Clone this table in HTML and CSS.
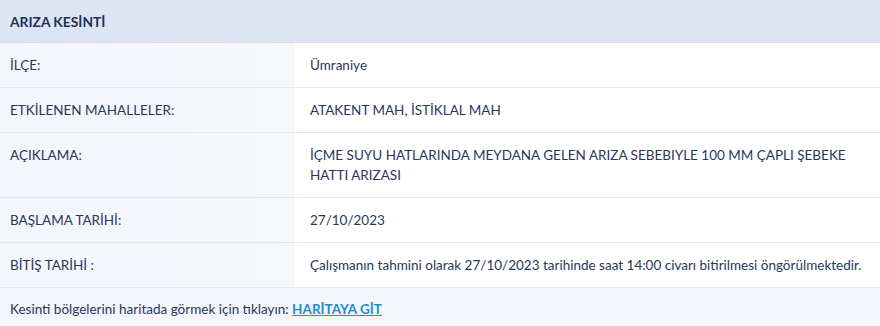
FILE: index.html
```html
<!DOCTYPE html>
<html lang="tr">
<head>
<meta charset="utf-8">
<link rel="stylesheet" href="styles.css">
</head>
<body>
<div class="card">
  <div class="card-header">ARIZA KESİNTİ</div>
  <div class="row">
    <div class="label">İLÇE:</div>
    <div class="value">Ümraniye</div>
  </div>
  <div class="row">
    <div class="label">ETKİLENEN MAHALLELER:</div>
    <div class="value">ATAKENT MAH, İSTİKLAL MAH</div>
  </div>
  <div class="row">
    <div class="label">AÇIKLAMA:</div>
    <div class="value">İÇME SUYU HATLARINDA MEYDANA GELEN ARIZA SEBEBIYLE 100 MM ÇAPLI ŞEBEKE<br>HATTI ARIZASI</div>
  </div>
  <div class="row">
    <div class="label">BAŞLAMA TARİHİ:</div>
    <div class="value">27/10/2023</div>
  </div>
  <div class="row">
    <div class="label">BİTİŞ TARİHİ :</div>
    <div class="value">Çalışmanın tahmini olarak 27/10/2023 tarihinde saat 14:00 civarı bitirilmesi öngörülmektedir.</div>
  </div>
  <div class="footer">Kesinti bölgelerini haritada görmek için tıklayın: <a class="map-link" href="#">HARİTAYA GİT</a></div>
</div>
</body>
</html>
```
FILE: styles.css
```css
html, body {
  margin: 0;
  padding: 0;
  background: #ffffff;
}
body {
  font-family: "Lato", "Noto Sans", sans-serif;
  font-size: 13.5px;
  color: #27375a;
}
.card {
  width: 880px;
}
.card-header {
  background: #dde4f4;
  display: flex;
  align-items: center;
  padding: 0 10px;
  font-size: 13.8px;
  font-weight: 700;
  color: #1e3156;
  border-bottom: 1px solid #d6dde9;
  box-sizing: border-box;
  height: 43px;
}
.row {
  display: flex;
  border-bottom: 1px solid #e5e8ee;
}
.label {
  width: 295px;
  flex: none;
  box-sizing: border-box;
  padding: 12px 10px;
  line-height: 20px;
  background: linear-gradient(to right, #f3f6fb, #f6f8fc);
}
.value {
  flex: 1;
  padding: 12px 4px 12px 15px;
  line-height: 20px;
  background: #ffffff;
}
.footer {
  background: #f4f6fb;
  box-sizing: border-box;
  padding: 11px 10px 0;
  line-height: 20px;
  height: 38px;
}
.map-link {
  color: #1f8ccd;
  font-weight: 700;
  text-decoration: underline;
}
```
